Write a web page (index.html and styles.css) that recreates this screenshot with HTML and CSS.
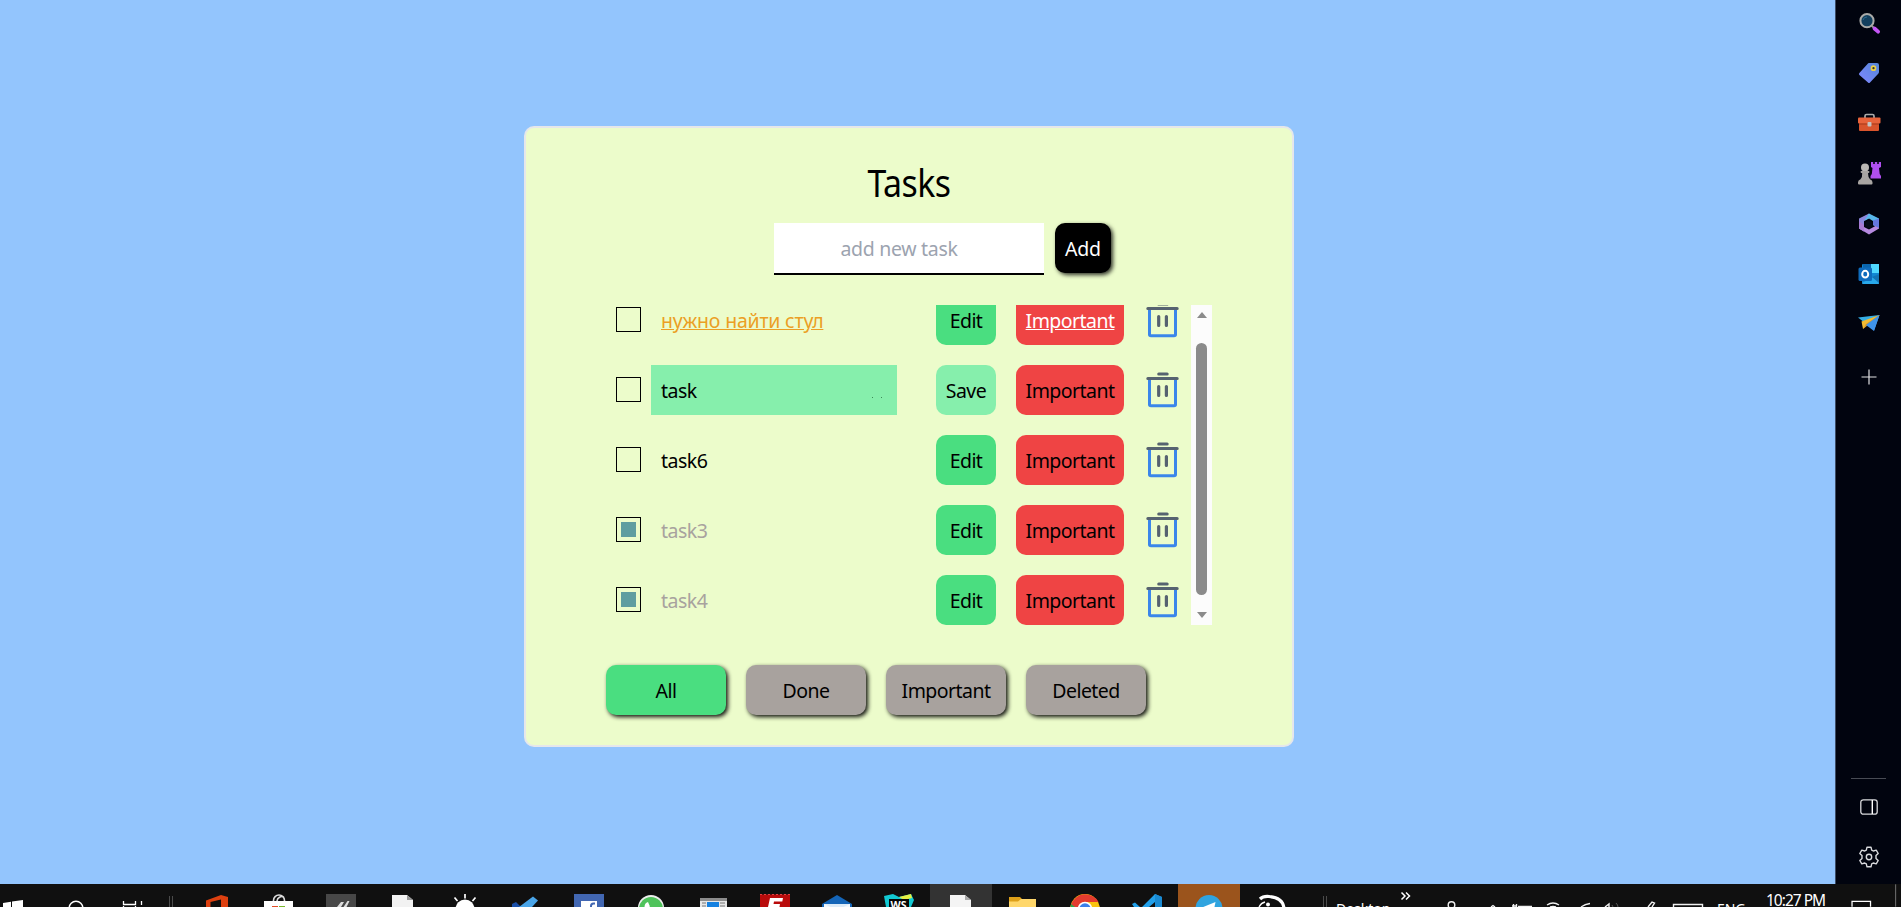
FILE: index.html
```html
<!DOCTYPE html>
<html lang="en">
<head>
<meta charset="utf-8">
<title>Tasks</title>
<link rel="stylesheet" href="styles.css">
</head>
<body>
<svg class="defs" width="0" height="0" aria-hidden="true">
  <symbol id="trash" viewBox="0 0 40 50">
    <path d="M9.500 15V39.5Q9.500 40.7 11 40.7H34Q35.500 40.7 35.500 39.5V15" fill="none" stroke="#3b86ea" stroke-width="3"/>
    <path d="M7.800 13.500H37.200M18.700 9H27.200" fill="none" stroke="#566270" stroke-width="3" stroke-linecap="round"/>
    <path d="M18.700 21.500V30.500M26.400 21.500V30.500" fill="none" stroke="#566270" stroke-width="3.200" stroke-linecap="round"/>
  </symbol>
</svg>
<div class="screen">
  <div class="upper">
    <main class="page">
      <section class="card">
        <h1 class="title">Tasks</h1>
        <div class="add-row">
          <div class="new-task">add new task</div>
          <button class="btn add">Add</button>
        </div>
        <div class="list-wrap">
          <ul class="list">
            <li class="row"><i class="box"></i><span class="name hot">нужно найти стул</span><button class="btn edit">Edit</button><button class="btn imp on">Important</button><svg class="trash"><use href="#trash"/></svg></li>
            <li class="row"><i class="box"></i><span class="name editing">task<i class="dots"></i></span><button class="btn edit save">Save</button><button class="btn imp">Important</button><svg class="trash"><use href="#trash"/></svg></li>
            <li class="row"><i class="box"></i><span class="name">task6</span><button class="btn edit">Edit</button><button class="btn imp">Important</button><svg class="trash"><use href="#trash"/></svg></li>
            <li class="row"><i class="box checked"></i><span class="name done">task3</span><button class="btn edit">Edit</button><button class="btn imp">Important</button><svg class="trash"><use href="#trash"/></svg></li>
            <li class="row"><i class="box checked"></i><span class="name done">task4</span><button class="btn edit">Edit</button><button class="btn imp">Important</button><svg class="trash"><use href="#trash"/></svg></li>
          </ul>
          <div class="scrollbar"><i class="up"></i><i class="thumb"></i><i class="down"></i></div>
        </div>
        <div class="filters">
          <button class="btn filter active">All</button>
          <button class="btn filter">Done</button>
          <button class="btn filter">Important</button>
          <button class="btn filter">Deleted</button>
        </div>
      </section>
    </main>
    <aside class="sidebar">
      <div class="tools">
        <svg viewBox="0 0 24 24"><circle cx="10" cy="9.7" r="6.6" fill="#123f5e" stroke="#a9aaa8" stroke-width="2"/><path d="M6 9a4 4 0 0 1 4-3" stroke="#2d6c90" fill="none"/><path d="M14.5 14.5l2 2" stroke="#999" stroke-width="2"/><path d="M17.5 17.5l3.6 3.2" stroke="#c455f5" stroke-width="3.8" stroke-linecap="round"/></svg>
        <svg viewBox="0 0 24 24"><defs><linearGradient id="tg" x1="1" y1="0" x2="0" y2="1"><stop offset="0" stop-color="#5487d8"/><stop offset="1" stop-color="#8087ff"/></linearGradient></defs><path d="M12 2h8q2 0 2 2v7q0 1-1 2l-8 8.500q-1 1-2 0l-8.600-7.500q-1-1 0-2L10.500 3q.7-1 1.500-1z" fill="url(#tg)"/><circle cx="16.500" cy="7.200" r="2" fill="#333" stroke="#e8d04a" stroke-width="1.700"/></svg>
        <svg viewBox="0 0 24 24"><path d="M8 7V5q0-1.500 1.500-1.500h6Q17 3.500 17 5v2" fill="none" stroke="#aaa" stroke-width="1.700"/><rect x="2" y="11" width="20" height="9" rx="1" fill="#d9542c"/><rect x="1" y="6.500" width="22.500" height="6" rx="1" fill="#e8633b"/><path d="M2 13h20" stroke="#a63a1b"/><rect x="10.500" y="11" width="4" height="4.500" rx="1" fill="#c5c2c0"/></svg>
        <svg viewBox="0 0 24 24"><path d="M14 1h2.200v2h1.600V1h2.400v2h1.600V1H24v5l-2 1 .7 6 1.300 2v2.500H13.500V15l1.300-2 .7-6-1.500-1z" fill="#b04ff0"/><circle cx="8" cy="6.500" r="4" fill="#bbb8b5"/><path d="M3.500 11q0-1 1-1h7q1 0 1 1t-1.500 1.300q0 4 2 6 2.500 1 2.500 3v1.200q0 1-1 1H2q-1 0-1-1v-1.200q0-2 2.500-3 2-2 1.700-6-1.700-.3-1.700-1.300z" fill="#a8a5a2"/></svg>
        <svg viewBox="0 0 24 24"><path d="M12 1.500L2 6.500v10l5 3V9l7-4z" fill="#8b86dc"/><path d="M12 1.500l10 5v10L16 13V9l-4-2.500L7 9z" fill="#58b7ea"/><path d="M22 12v4.500L12 22.500 3 17l4-2 5 2.500z" fill="#b68ae0"/><path d="M16 8.500l6-2V16l-6-3z" fill="#6578e0"/><path d="M2 16.500l5 3V13l-5-4z" fill="#a77bd4"/><path d="M12 8.500l3.500 2v4L12 16.500l-3.500-2v-4z" fill="#040b18"/></svg>
        <svg viewBox="0 0 24 24"><rect x="5" y="2" width="17" height="20" rx="1.200" fill="#1188d3"/><path d="M13 2h9v9h-9z" fill="#50d9ff"/><path d="M6 2h8v5H6z" fill="#0a65ad"/><path d="M5 21l17-9v9q0 1-1 1H6z" fill="#28a8ea"/><path d="M15 15l7 6v-9z" fill="#1273b4"/><rect x="1.500" y="5.500" width="13.500" height="13.500" rx="1.500" fill="#0f6cbd"/><ellipse cx="8.200" cy="12.200" rx="3" ry="3.400" fill="none" stroke="#fff" stroke-width="2"/></svg>
        <svg viewBox="0 0 24 24"><path d="M1 5.500L22.500 3 8 11z" fill="#36aee5"/><path d="M22.500 3L8 11l9 7.500z" fill="#4f9cf0"/><path d="M22.500 3L4.500 9.500 6 17z" fill="#f3bb31"/><path d="M22.500 3L6 17l3-5z" fill="#d3942b"/><path d="M22.500 3L9 13l8 6z" fill="#3f93e8"/></svg>
      </div>
      <svg class="plus" viewBox="0 0 16 16"><path d="M.5 8h15M8 .5v15" stroke="#e2e2e4" stroke-width="1.200"/></svg>
      <div class="bottom">
        <hr>
        <svg class="panel" viewBox="0 0 18 16"><rect x=".8" y=".8" width="16.400" height="14.400" rx="2.500" fill="none" stroke="#d9dadd" stroke-width="1.300"/><path d="M12.300 1v14" stroke="#fff" stroke-width="1.400"/></svg>
        <svg class="gear" viewBox="0 0 22 22"><path d="M9 1.200h4l.7 2.900 1.600.9 2.900-.9 2 3.400-2.200 2.100v2.800l2.200 2.100-2 3.400-2.900-.9-1.600.9-.7 2.900H9l-.7-2.900-1.600-.9-2.900.9-2-3.400 2.200-2.100V9.600L1.800 7.500l2-3.400 2.900.9 1.600-.9z" fill="none" stroke="#d9dadd" stroke-width="1.400" stroke-linejoin="round"/><circle cx="11" cy="11" r="2.700" fill="none" stroke="#d9dadd" stroke-width="1.400"/></svg>
      </div>
    </aside>
  </div>
  <footer class="taskbar">
    <svg class="start" viewBox="0 0 186 23">
      <path d="M3 19l8-1.200V23H3zM12 17.600L23 16v7H12z" fill="#fff"/>
      <circle cx="76" cy="24" r="6.800" fill="none" stroke="#fff" stroke-width="1.500"/>
      <path d="M123.500 17v3.500h12V17M123.500 23v-1M135.500 23v-1M141.500 17v4" fill="none" stroke="#fff" stroke-width="1.300"/>
      <path d="M169.500 12v11M172.500 12v11" stroke="#4b4b4b"/>
    </svg>
    <div class="apps">
      <svg><path d="M20 23v-6.500L35 11l7 2v10h-7V15.500L24.500 18v5z" fill="#dd4010"/></svg>
      <svg><path d="M25.500 18v-1.500a5.500 5.500 0 0 1 11 0V18M29 17a5 5 0 0 1 7-4" fill="none" stroke="#ddd" stroke-width="1.600"/><path d="M16 17h29v6H16z" fill="#fff"/><path d="M24 22h6v1h-6z" fill="#e34c26"/><path d="M31 22h6v1h-6z" fill="#79b82b"/></svg>
      <svg><path d="M16 10h30v13H16z" fill="#474747"/><path d="M27 23l4-5h3l-3 5zM33.500 23l4-6h2l-3 6z" fill="#ddd"/></svg>
      <svg><path d="M20 11h15l6 5v7H20z" fill="#f2f2f2"/><path d="M35 11v5h6z" fill="#999"/></svg>
      <svg><path d="M21.500 25a9.500 9.500 0 0 1 19 0z" fill="#fff"/><path d="M31 10v4.500M20.500 13.500l3 3.500M41.500 13.500l-3 3.500" stroke="#fff" stroke-width="1.700"/></svg>
      <svg><path d="M16 20l4-2 5 5h-9z" fill="#1a4fa8"/><path d="M23 23L37 12.500l5 4-6 6.500z" fill="#4aa5e8"/></svg>
      <svg><path d="M16 10h30v13H16z" fill="#4267b2"/><path d="M23 17h16v6H23z" fill="#fff"/><path d="M33 23v-1q0-2.500 2.500-2.500H37" fill="none" stroke="#4267b2" stroke-width="2"/></svg>
      <svg><circle cx="31" cy="24" r="13" fill="#eee"/><circle cx="31" cy="25" r="12" fill="#4fc35b"/><path d="M24.500 23q0-4 3.500-5l2 4.500-1 .5z" fill="#fff"/></svg>
      <svg><path d="M18 14h27v9H18z" fill="#e7e7e7"/><path d="M18 14h27v3H18z" fill="#8c8c8c"/><path d="M25 18h12v5H25z" fill="#1681e0"/><path d="M20 19h4M20 22h4M38 19h5M38 22h5" stroke="#777"/></svg>
      <svg><path d="M16 10.500h30V23H16z" fill="#b90b0b"/><path d="M16 10.500h30" stroke="#e34141" stroke-dasharray="2 2"/><path d="M24 23l2-9h13l-.7 3.500H30L29.500 20H36l-.5 3z" fill="#fff"/></svg>
      <svg><path d="M16 20L31 11l15 9v3H16z" fill="#1465b8"/><path d="M18 20h26v3H18z" fill="#f2f8fd"/><path d="M18 20l13 6 13-6z" fill="#dcebf8"/></svg>
      <svg><path d="M16 12l9-2 6 3 12-3 3 6-3 7H18z" fill="#12c9d3"/><path d="M31 13l12-3 1 4-8 2z" fill="#e6ef42"/><path d="M21 15h20v8H21z" fill="#070707"/><text x="22.500" y="24.500" font-size="10.500" fill="#fff" class="b">WS</text></svg>
      <svg class="open"><path d="M20 11h15l6 5v7H20z" fill="#f4f4f4"/><path d="M35 11v5h6z" fill="#aaa"/></svg>
      <svg><path d="M17 13h11l3 3H44v7H17z" fill="#dea019"/><path d="M17 17.500h9l3-2.500h15v8H17z" fill="#ffd76b"/></svg>
      <svg><circle cx="31" cy="25" r="15" fill="#f9c30f"/><path d="M17 21A15 15 0 0 1 44.500 18H31L24 25z" fill="#e33b2e"/><path d="M17 20l7 5-8 2z" fill="#2da44e"/><circle cx="31" cy="25" r="7.300" fill="#fff"/><circle cx="31" cy="25" r="5.700" fill="#3c7fe8"/></svg>
      <svg><path d="M16 20l3-1.500L24 23h-6zM26 23l13-13 7 3v10h-7v-5l-6 5z" fill="#22a0ea"/><path d="M39 10l7 3v10h-7z" fill="#1a8ad2"/></svg>
      <svg class="alert"><circle cx="31" cy="24.500" r="13.500" fill="#30a4df"/><path d="M24 23.500L37.500 18l-1 5z" fill="#fff"/></svg>
      <svg><path d="M20 15q3-3 9-2.500 14 1 15 12" fill="none" stroke="#fff" stroke-width="3.200"/><path d="M19 23q2-4 6-5" fill="none" stroke="#fff" stroke-width="1.300"/><circle cx="28" cy="20.500" r="2" fill="#fff"/></svg>
    </div>
    <svg class="sep" viewBox="0 0 32 23"><path d="M21.500 12v11M24.500 12v11" stroke="#4b4b4b"/></svg>
    <span class="desktop">Desktop</span>
    <svg class="tray" viewBox="0 0 316 23">
      <path d="M11.500 8.500l3.500 3.500-3.500 3.500M16 8.500l3.500 3.500-3.500 3.500" fill="none" stroke="#fff" stroke-width="1.500"/>
      <g fill="none" stroke="#f0f0f0" stroke-width="1.400"><circle cx="61.500" cy="21" r="3.300"/><path d="M101 23l2-1.500 2 1.500M122 22h5M123.500 20v3M126.500 20v3M128 22.500h14"/><path d="M157 21q6-4 12 0M160 23q3-1 6 0M191 23q4-3 9-3.500M215 23l4-3v3"/><path d="M258 23l4-5 2.500 1-2.500 4M283.500 23v-2.500h29V23"/></g>
      <path d="M226 19q2 2 2 4M222 21l1 2" stroke="#555" fill="none"/>
    </svg>
    <span class="lang">ENG</span>
    <span class="clock">10:27 PM</span>
    <svg class="note" viewBox="0 0 76 23"><path d="M25.700 23v-5.500h19V23" fill="none" stroke="#fff" stroke-width="1.300"/><path d="M70.500 0v23" stroke="#777"/></svg>
  </footer>
</div>
</body>
</html>
```
FILE: styles.css
```css
* { box-sizing: border-box; }
body {
  margin: 0;
  font-family: "Noto Sans", "Open Sans", sans-serif;
  font-size: 19.500px;
  line-height: 30px;
  color: #000;
}
svg { display: block; flex: none; }
.defs { position: absolute; }
.screen { width: 1901px; height: 907px; overflow: hidden; display: flex; flex-direction: column; }
.upper { display: flex; height: 884px; }
.page {
  flex: 1;
  background: #93c5fd;
  padding: 126px 0 0 524px;
}
.card {
  width: 770px;
  height: 621px;
  border: 2px solid #e5e7eb;
  border-radius: 10px;
  background: #ecfccb;
  padding: 29px 80px 0;
  display: flex;
  flex-direction: column;
}
.title {
  margin: 0;
  font-size: 38.500px;
  font-weight: 400;
  line-height: 50px;
  text-align: center;
  letter-spacing: -0.6px;
  transform: scaleX(0.88);
}
.add-row { display: flex; gap: 11px; margin: 16px 0 0 168px; height: 52px; }
.new-task {
  width: 270px;
  height: 52px;
  background: #fff;
  border-bottom: 2px solid #000;
  color: #9ca3af;
  text-align: center;
  padding: 11px 20px 9px 0;
  letter-spacing: -0.300px;
}
.btn {
  border: 0;
  padding: 2px 0 0;
  height: 50px;
  border-radius: 10px;
  font: inherit;
  color: #000;
  letter-spacing: -0.550px;
  flex: none;
}
.add { width: 56px; background: #000; color: #fff; letter-spacing: -0.2px; box-shadow: 2px 2px 4px #000c; }
.list-wrap { display: flex; margin-top: 30px; height: 320px; }
.list {
  width: 585px;
  margin: 0;
  padding: 0 0 0 10px;
  list-style: none;
  overflow: hidden;
  display: flex;
  flex-direction: column;
  gap: 20px;
  justify-content: flex-end;
}
.row { display: flex; height: 50px; flex: none; }
.box { width: 25px; height: 25px; margin: 12px 10px 0 0; border: 1px solid #000; flex: none; }
.checked { background: #5f9ea0; background-clip: content-box; padding: 4px; }
.name { width: 246px; margin-right: 39px; padding: 11px 10px 9px; letter-spacing: -0.5px; white-space: nowrap; }
.hot { color: #eb9f24; text-decoration: underline; letter-spacing: -0.2px; }
.done { color: #a8a29e; }
.editing { background: #86efac; display: flex; justify-content: space-between; }
.dots { width: 10px; height: 1px; margin: 21px 5px 0 0; border: solid #3d8a58; border-width: 0 1px; }
.edit { width: 60px; background: #4ade80; margin-right: 20px; }
.save { background: #86efac; }
.imp { width: 108px; background: #ef4444; margin-right: 16px; }
.on { color: #fff; text-decoration: underline; }
.trash { width: 40px; height: 50px; }
.scrollbar {
  width: 21px;
  background: #fcfcfc;
  display: flex;
  flex-direction: column;
  align-items: center;
  padding: 7px 0;
}
.up, .down { border: 5px solid transparent; width: 0; height: 0; }
.up { border-top: 0; border-bottom: 6px solid #8b8b8b; }
.down { border-bottom: 0; border-top: 6px solid #8b8b8b; }
.thumb { width: 11px; height: 252px; margin: 25px 0 17px; border-radius: 6px; background: #8b8b8b; }
.filters { display: flex; gap: 20px; margin-top: 40px; }
.filter { width: 120px; background: #a8a29e; box-shadow: 2px 2px 4px #000e; }
.active { background: #4ade80; }

.sidebar {
  width: 66px;
  background: #01040f;
  border-left: 1px solid #3c4c66;
  display: flex;
  flex-direction: column;
  align-items: center;
  padding: 10.500px 0 16px 0;
}
.tools { display: flex; flex-direction: column; gap: 26.300px; }
.tools svg { width: 24px; height: 24px; }
.plus { width: 16px; height: 16px; margin-top: 33px; }
.bottom { margin-top: auto; display: flex; flex-direction: column; align-items: center; }
.bottom hr { width: 35px; height: 1px; margin: 0 0 20px; border: 0; background: #484b54; }
.panel { width: 18px; height: 16px; margin-bottom: 31px; }
.gear { width: 22px; height: 22px; }

.taskbar { display: flex; height: 23px; background: #101010; overflow: hidden; color: #fff; font-size: 15.500px; line-height: 22px; }
.start { width: 186px; height: 23px; }
.apps { display: flex; }
.apps svg { width: 62px; height: 23px; }
.open { background: #333; }
.alert { background: #9b541c; }
.b { font-family: "Open Sans", sans-serif; font-weight: 700; }
.sep { width: 32px; height: 23px; }
.desktop { width: 56px; padding: 15px 0 0 2px; }
.tray { width: 316px; height: 23px; }
.lang { width: 46px; margin-left: 11px; padding-top: 15px; }
.desktop, .lang { font-size: 14px; line-height: 20px; flex: none; }
.clock { width: 64px; padding: 5px 0 0 3px; flex: none; white-space: nowrap; letter-spacing: -1px; }
.note { width: 74px; height: 23px; }
```
